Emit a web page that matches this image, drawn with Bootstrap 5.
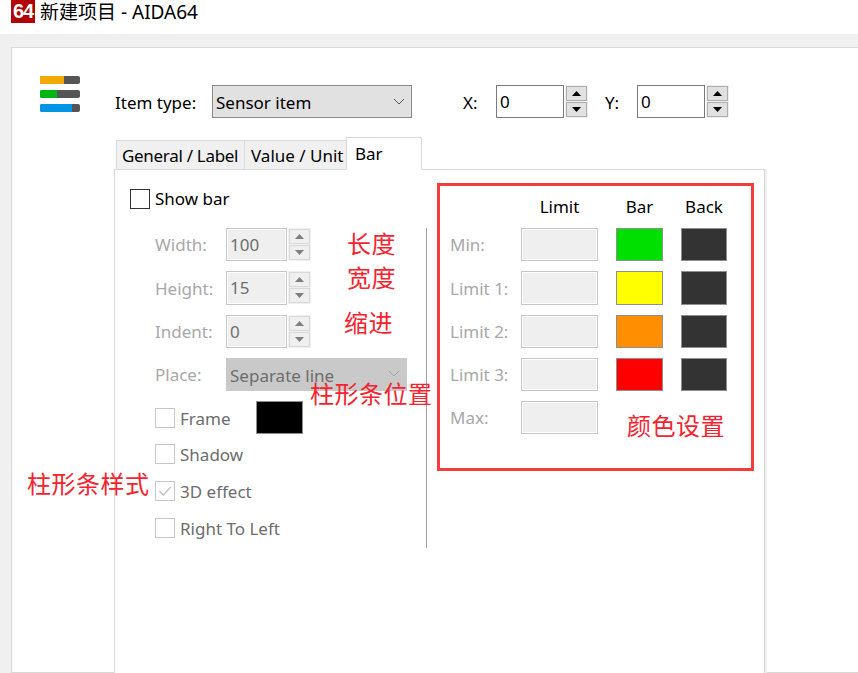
<!doctype html>
<html lang="zh-CN">
<head>
<meta charset="utf-8">
<title>新建项目 - AIDA64</title>
<link href="https://cdn.jsdelivr.net/npm/bootstrap@5.3.0/dist/css/bootstrap.min.css" rel="stylesheet">
<style>
html,body{height:673px;overflow:hidden;}
body{position:relative;background:#f0f0f0;font-family:"Noto Sans","Noto Sans CJK SC",sans-serif;font-size:17px;color:#000;line-height:1.2;}
.titlebar{height:34px;background:#fff;padding-left:11px;align-items:flex-start;}
.app-logo{width:24px;height:23px;background:#b30000;color:#fff;font:700 20px/23px "Liberation Sans",sans-serif;text-align:center;letter-spacing:-1px;}
.app-title{margin:1px 0 0 5px;font-size:19px;line-height:22px;}
.strip{height:13px;}
.sheet{margin-left:11px;height:626px;background:#fff;border:1px solid #d9d9d9;border-right:0;padding:28px 0 0 28px;}
.item-logo{width:40px;height:36px;margin-right:35px;flex:none;}
.top-controls{margin-top:9px;height:33px;}
.lbl-item,.lbl-x,.lbl-y{padding-top:4px;}
.lbl-item{width:97px;}
.lbl-x{width:33px;margin-left:51px;}
.lbl-y{width:32px;margin-left:17px;}
.win-select.form-select{width:200px;height:33px;border-radius:0;border:1px solid #8a8a8a;background-color:#e1e1e1;padding:2px 0 0 3px;font-size:17px;color:#000;line-height:29px;background-size:14px 8px;background-position:right 5px center;background-image:url("data:image/svg+xml,%3csvg xmlns='http://www.w3.org/2000/svg' viewBox='0 0 14 8'%3e%3cpath fill='none' stroke='%23555' d='M2 1l5 5 5-5'/%3e%3c/svg%3e");}
.win-select.is-off.form-select{width:181px;background-color:#c9c9c9;border-color:#c9c9c9;color:#6d6d6d;opacity:1;background-image:url("data:image/svg+xml,%3csvg xmlns='http://www.w3.org/2000/svg' viewBox='0 0 14 8'%3e%3cpath fill='none' stroke='%23a6a6a6' d='M2 1l5 5 5-5'/%3e%3c/svg%3e");}
.num-input.form-control{height:33.25px;border-radius:0;border:1px solid #7a7a7a;padding:0 0 0 3px;font-size:17px;color:#000;background:#fff;line-height:31px;}
.num-xy{width:68px;}
.num-off.form-control{width:61px;border:1px solid #c6c6c6;box-shadow:inset 0 0 0 1px #fff;background:#efefef;color:#6d6d6d;}
.spin{width:23px;height:33px;margin-left:1px;background:#f0f0f0;padding:1px;gap:1px;flex:none;}
.spin-btn{flex:1;background:#e1e1e1;border:1px solid #adadad;display:flex;align-items:center;justify-content:center;}
.spin-btn svg{width:9px;height:5px;fill:#000;display:block;}
.spin-off .spin-btn{background:#efefef;border-color:#d9d9d9;}
.spin-off .spin-btn svg{fill:#7f7f7f;}
.win-tabs.nav-tabs{margin:19px 0 0 76px;height:33px;border:0;align-items:flex-end;position:relative;z-index:1;}
.win-tabs .nav-link{margin:0;padding:0 0 0 5px;height:30px;line-height:30px;border:1px solid #d9d9d9;border-radius:0;background:#f0f0f0;color:#000;font-size:17px;}
.win-tabs .tab-a{width:129px;letter-spacing:-.3px;}
.win-tabs .tab-b{width:102px;border-left:0;padding-left:6px;}
.win-tabs .nav-link.active{width:76px;height:33px;padding-left:8px;line-height:32px;background:#fff;border-color:#d9d9d9;border-bottom-color:#fff;margin-left:-1px;color:#000;}
.pane{margin:-1px 0 0 74px;width:651px;height:520px;background:#fff;border:1px solid #d9d9d9;border-bottom:0;box-shadow:2px 0 0 #efefef;padding:13px 0 0 15px;}
.pane-left{width:296px;flex:none;}
.win-check.form-check{min-height:20px;padding:0;margin:0;display:flex;align-items:center;}
.win-check.show-line{margin-top:6px;}
.win-check .form-check-input{float:none;margin:0 5px 0 0;width:20px;height:20px;border-radius:0;border:1px solid #333;flex:none;opacity:1;background-color:#fff;}
.win-check .form-check-label{opacity:1;color:#000;line-height:20px;height:20px;}
.win-check.is-off .form-check-input{border-color:#c6c6c6;}
.win-check.is-off .form-check-input:checked{background-color:#fff;border-color:#c6c6c6;background-size:16px;background-image:url("data:image/svg+xml,%3csvg xmlns='http://www.w3.org/2000/svg' viewBox='0 0 20 20'%3e%3cpath fill='none' stroke='%23c6c6c6' stroke-width='2' d='M3 10l5 5 9-10'/%3e%3c/svg%3e");}
.win-check.is-off .form-check-input[disabled]~.form-check-label{color:#6d6d6d;opacity:1;padding-top:1px;}
.bar-form{margin:19px 0 0 25px;row-gap:10px;grid-auto-rows:33.25px;display:grid;}
.form-row{align-items:center;}
.dim-lbl{color:#a8a8a8;padding-top:2px;white-space:nowrap;}
.bar-form .dim-lbl{width:71px;}
.frame-swatch{margin-left:25px;}
.swatch{width:100%;height:33.25px;border:1px solid #8f8f8f;background:#333;}
.frame-swatch.swatch{width:47px;}
.check-stack{margin:10px 0 0 25px;gap:17px;}
.v-rule{width:1px;height:320px;margin-top:45px;background:#a0a0a0;flex:none;}
.color-box{width:317px;height:288px;margin-left:10px;border:3px solid #f33c3c;padding:0 0 0 10px;flex:none;}
.color-grid{display:grid;grid-template-columns:53px 77px 47px 46px;column-gap:18px;align-items:center;}
.color-head{height:42px;text-align:center;padding-top:1px;}
.color-rows{row-gap:10px;grid-auto-rows:33.25px;}
.limit-box{height:33.25px;background:#efefef;border:1px solid #c6c6c6;box-shadow:inset 0 0 0 1px #fff;}
.note{position:absolute;margin:0;color:#f6222e;font-family:"Noto Sans CJK SC",sans-serif;font-size:24px;line-height:26px;white-space:nowrap;letter-spacing:.5px;}
.n1{left:347px;top:230px;}
.n2{left:347px;top:264px;}
.n3{left:344px;top:309px;}
.n4{left:310px;top:380px;}
.n5{left:27px;top:470px;}
.n6{left:627px;top:412px;}
</style>
</head>
<body>
<header class="titlebar d-flex">
  <div class="app-logo">64</div>
  <div class="app-title">新建项目 - AIDA64</div>
</header>
<div class="strip"></div>
<main class="sheet">
  <div class="d-flex">
    <svg class="item-logo" viewBox="0 0 40 36" aria-hidden="true">
      <rect width="40" height="8" y="0" rx="2" fill="#555"/><path d="M2 0h22v8H2a2 2 0 0 1-2-2V2a2 2 0 0 1 2-2z" fill="#f2a900"/>
      <rect width="40" height="8" y="14" rx="2" fill="#555"/><path d="M2 14h15v8H2a2 2 0 0 1-2-2v-4a2 2 0 0 1 2-2z" fill="#00b612"/>
      <rect width="40" height="8" y="28" rx="2" fill="#555"/><path d="M2 28h30v8H2a2 2 0 0 1-2-2v-4a2 2 0 0 1 2-2z" fill="#0094e4"/>
    </svg>
    <div class="top-controls d-flex align-items-center">
      <span class="lbl-item">Item type:</span>
      <select class="form-select win-select"><option>Sensor item</option></select>
      <span class="lbl-x">X:</span>
      <input class="form-control num-input num-xy" value="0">
      <div class="spin d-flex flex-column">
        <div class="spin-btn"><svg viewBox="0 0 9 5"><path d="M4.500 0L9 5H0z"/></svg></div>
        <div class="spin-btn"><svg viewBox="0 0 9 5"><path d="M0 0h9L4.500 5z"/></svg></div>
      </div>
      <span class="lbl-y">Y:</span>
      <input class="form-control num-input num-xy" value="0">
      <div class="spin d-flex flex-column">
        <div class="spin-btn"><svg viewBox="0 0 9 5"><path d="M4.500 0L9 5H0z"/></svg></div>
        <div class="spin-btn"><svg viewBox="0 0 9 5"><path d="M0 0h9L4.500 5z"/></svg></div>
      </div>
    </div>
  </div>
  <ul class="nav nav-tabs win-tabs">
    <li class="nav-item"><a class="nav-link tab-a" href="#">General / Label</a></li>
    <li class="nav-item"><a class="nav-link tab-b" href="#">Value / Unit</a></li>
    <li class="nav-item"><a class="nav-link active" href="#">Bar</a></li>
  </ul>
  <section class="pane d-flex align-items-start">
    <div class="pane-left">
      <div class="form-check win-check show-line">
        <input class="form-check-input" type="checkbox" id="c0"><label class="form-check-label" for="c0">Show bar</label>
      </div>
      <div class="bar-form">
        <div class="form-row d-flex">
          <span class="dim-lbl">Width:</span>
          <input class="form-control num-input num-off" value="100" disabled>
          <div class="spin spin-off d-flex flex-column">
            <div class="spin-btn"><svg viewBox="0 0 9 5"><path d="M4.500 0L9 5H0z"/></svg></div>
            <div class="spin-btn"><svg viewBox="0 0 9 5"><path d="M0 0h9L4.500 5z"/></svg></div>
          </div>
        </div>
        <div class="form-row d-flex">
          <span class="dim-lbl">Height:</span>
          <input class="form-control num-input num-off" value="15" disabled>
          <div class="spin spin-off d-flex flex-column">
            <div class="spin-btn"><svg viewBox="0 0 9 5"><path d="M4.500 0L9 5H0z"/></svg></div>
            <div class="spin-btn"><svg viewBox="0 0 9 5"><path d="M0 0h9L4.500 5z"/></svg></div>
          </div>
        </div>
        <div class="form-row d-flex">
          <span class="dim-lbl">Indent:</span>
          <input class="form-control num-input num-off" value="0" disabled>
          <div class="spin spin-off d-flex flex-column">
            <div class="spin-btn"><svg viewBox="0 0 9 5"><path d="M4.500 0L9 5H0z"/></svg></div>
            <div class="spin-btn"><svg viewBox="0 0 9 5"><path d="M0 0h9L4.500 5z"/></svg></div>
          </div>
        </div>
        <div class="form-row d-flex">
          <span class="dim-lbl">Place:</span>
          <select class="form-select win-select is-off" disabled><option>Separate line</option></select>
        </div>
        <div class="form-row d-flex">
          <div class="form-check win-check is-off">
            <input class="form-check-input" type="checkbox" id="c1" disabled><label class="form-check-label" for="c1">Frame</label>
          </div>
          <div class="swatch frame-swatch bg-black"></div>
        </div>
      </div>
      <div class="check-stack d-flex flex-column">
        <div class="form-check win-check is-off">
          <input class="form-check-input" type="checkbox" id="c2" disabled><label class="form-check-label" for="c2">Shadow</label>
        </div>
        <div class="form-check win-check is-off">
          <input class="form-check-input" type="checkbox" id="c3" checked disabled><label class="form-check-label" for="c3">3D effect</label>
        </div>
        <div class="form-check win-check is-off">
          <input class="form-check-input" type="checkbox" id="c4" disabled><label class="form-check-label" for="c4">Right To Left</label>
        </div>
      </div>
    </div>
    <div class="v-rule"></div>
    <div class="color-box">
      <div class="color-grid color-head">
        <span></span><span>Limit</span><span>Bar</span><span>Back</span>
      </div>
      <div class="color-grid color-rows">
        <span class="dim-lbl">Min:</span><div class="limit-box"></div><div class="swatch" style="background:#00e000"></div><div class="swatch"></div>
        <span class="dim-lbl">Limit 1:</span><div class="limit-box"></div><div class="swatch" style="background:#ffff00"></div><div class="swatch"></div>
        <span class="dim-lbl">Limit 2:</span><div class="limit-box"></div><div class="swatch" style="background:#ff8f00"></div><div class="swatch"></div>
        <span class="dim-lbl">Limit 3:</span><div class="limit-box"></div><div class="swatch" style="background:#ff0000"></div><div class="swatch"></div>
        <span class="dim-lbl">Max:</span><div class="limit-box"></div>
      </div>
    </div>
  </section>
</main>
<p class="note n1">长度</p>
<p class="note n2">宽度</p>
<p class="note n3">缩进</p>
<p class="note n4">柱形条位置</p>
<p class="note n5">柱形条样式</p>
<p class="note n6">颜色设置</p>
<script src="https://cdn.jsdelivr.net/npm/bootstrap@5.3.0/dist/js/bootstrap.bundle.min.js"></script>
</body>
</html>
